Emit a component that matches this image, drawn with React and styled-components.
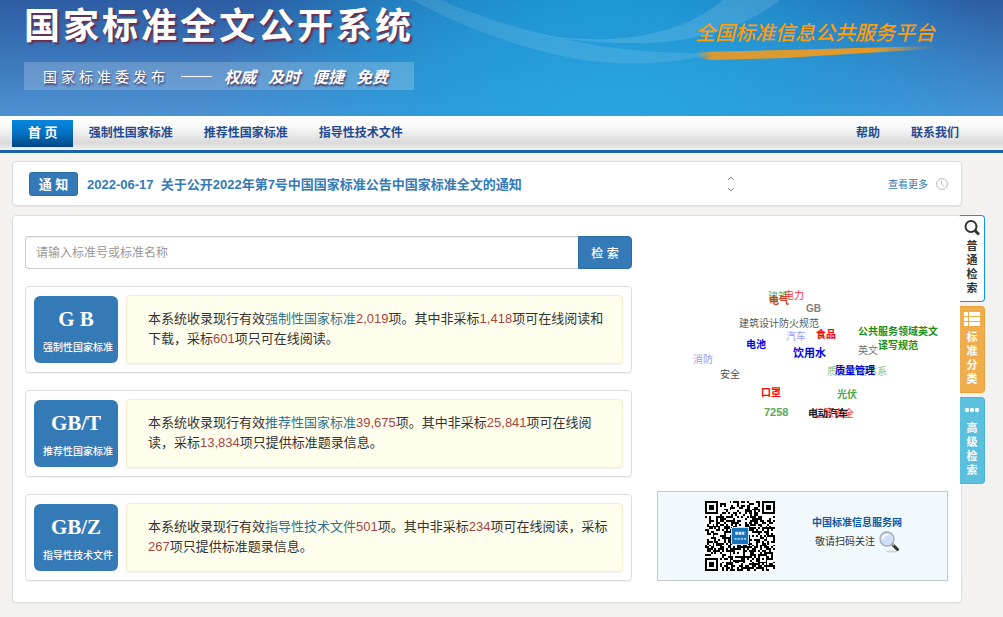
import React, { useState } from 'react'
import styled, { createGlobalStyle, css } from 'styled-components'

const sans = '"Liberation Sans", "Noto Sans CJK SC", sans-serif'
const serif = '"Liberation Serif", "Noto Sans CJK SC", serif'

const GlobalStyle = createGlobalStyle`
  * {
    box-sizing: border-box;
  }

  body {
    margin: 0;
    background: #f3f2f0;
    color: #333;
    font-family: ${sans};
    font-size: 12px;
  }

  button, input {
    font-family: inherit;
  }

  a {
    text-decoration: none;
  }
`

const Header = styled.header`
  position: relative;
  display: flex;
  justify-content: space-between;
  height: 116px;
  padding: 0 64px 0 24px;
  overflow: hidden;
  background:
    radial-gradient(ellipse 420px 220px at 62% 100%, #29a5e0 0%, rgba(38, 160, 222, 0.7) 45%, rgba(41, 165, 224, 0) 100%),
    radial-gradient(ellipse 360px 170px at 60% 0%, rgba(14, 144, 202, 0.9) 0%, rgba(14, 144, 202, 0) 100%),
    linear-gradient(180deg, #2d5ca3 0%, #4b92d3 100%);
`

const Waves = styled.svg`
  position: absolute;
  top: 0;
  left: 0;
  width: 100%;
  height: 116px;
`

const Brand = styled.div`
  position: relative;
  padding-top: 4px;
`

const SiteTitle = styled.h1`
  margin: 0;
  height: 58px;
  color: #fff;
  font-size: 36px;
  font-weight: 700;
  letter-spacing: 3px;
  line-height: 46px;
  text-shadow: 2px 2px 2px #6b2a4c;
`

const Slogan = styled.div`
  display: flex;
  align-items: center;
  height: 28px;
  padding: 0 20px 0 19px;
  gap: 12px;
  background: rgba(255, 255, 255, 0.2);
  color: #fff;
  font-family: ${serif};
  font-size: 14px;
  text-shadow: 1px 2px 2px #4a3460;
`

const Publisher = styled.span`
  letter-spacing: 4px;
`

const Dash = styled.span`
  width: 31px;
  height: 1px;
  background: #fff;
`

const Virtue = styled.em`
  font-size: 16px;
  font-weight: 700;
`

const Platform = styled.div`
  position: relative;
  padding-top: 20px;
  width: 244px;
  color: #ff9c0a;
  font-family: ${serif};
  font-size: 20px;
  font-style: italic;
  font-weight: 500;
  line-height: 26px;
  white-space: nowrap;

  svg {
    display: block;
  }
`

const Nav = styled.nav`
  display: flex;
  justify-content: space-between;
  height: 37px;
  padding: 4px 29px 0 12px;
  border-bottom: 3px solid #1b62ab;
  background: linear-gradient(180deg, #fff 0%, #fafafa 30%, #dadada 80%, #e6e6e6 90%, #f2f2f2 100%);
`

const NavGroup = styled.div`
  display: flex;
`

const NavLink = styled.a`
  height: 27px;
  padding: 0 15px 0 16px;
  color: #1f4a8f;
  font-size: 12px;
  font-weight: 700;
  line-height: 26px;

  ${({ $active }) => $active && css`
    background: linear-gradient(180deg, #0488de 0%, #0470c0 50%, #004684 100%);
    color: #fff;
    font-size: 13px;
  `}
`

const Panel = styled.section`
  border: 1px solid #ddd;
  border-radius: 4px;
  background: #fff;
  box-shadow: 0 1px 1px rgba(0, 0, 0, 0.05);
`

const Notice = styled(Panel)`
  display: flex;
  align-items: center;
  justify-content: space-between;
  height: 45px;
  margin: 8px 41px 9px 12px;
  padding: 0 13px 0 16px;
`

const NoticeMain = styled.div`
  display: flex;
  align-items: center;
  gap: 9px;
`

const NoticeButton = styled.button`
  width: 49px;
  height: 24px;
  padding: 0;
  border: 1px solid #2e6da4;
  border-radius: 3px;
  background: #337ab7;
  color: #fff;
  font-size: 13px;
  font-weight: 700;
  cursor: pointer;
`

const NoticeLink = styled.a`
  color: #337ab7;
  font-size: 13px;
  font-weight: 700;
  white-space: pre;
`

const NoticeSide = styled.div`
  display: flex;
  align-items: center;
  justify-content: space-between;
  width: 221px;
`

const Pager = styled.div`
  display: flex;
  flex-direction: column;
  gap: 6px;
`

const PagerButton = styled.button`
  display: block;
  height: 5px;
  padding: 0;
  border: 0;
  background: none;
  cursor: pointer;

  svg {
    display: block;
  }
`

const More = styled.a`
  display: flex;
  align-items: center;
  gap: 8px;
  color: #337ab7;
  font-size: 10px;
`

const Main = styled.main`
  display: flex;
  align-items: flex-start;
  padding: 0 18px 14px 12px;
`

const Content = styled(Panel)`
  display: flex;
  flex: 1;
  gap: 25px;
  padding: 20px 13px 21px 12px;
`

const Left = styled.div`
  display: flex;
  flex: 1;
  flex-direction: column;
  gap: 17px;
`

const SearchForm = styled.form`
  display: flex;
`

const SearchInput = styled.input`
  flex: 1;
  height: 33px;
  padding: 0 10px;
  border: 1px solid #ccc;
  border-right: 0;
  border-radius: 4px 0 0 4px;
  box-shadow: inset 0 1px 1px rgba(0, 0, 0, 0.075);
  font-size: 12px;

  &::placeholder {
    color: #999;
  }
`

const SearchButton = styled.button`
  width: 54px;
  height: 33px;
  padding: 0;
  border: 1px solid #2e6da4;
  border-radius: 0 4px 4px 0;
  background: #337ab7;
  color: #fff;
  font-size: 12px;
  font-weight: 500;
  cursor: pointer;
`

const Row = styled.article`
  display: flex;
  align-items: center;
  gap: 8px;
  height: 87px;
  padding: 0 8px;
  border: 1px solid #ddd;
  border-radius: 4px;
  box-shadow: 0 1px 1px rgba(0, 0, 0, 0.05);
`

const Tile = styled.a`
  display: flex;
  flex-direction: column;
  flex-shrink: 0;
  align-items: center;
  width: 84px;
  height: 67px;
  padding: 8px 0 0 4px;
  border-radius: 6px;
  background: #337ab7;
  color: #fff;
  font-size: 10px;
  font-weight: 500;
  line-height: 14px;
`

const TileCode = styled.span`
  height: 37px;
  padding-right: 4px;
  font-family: ${serif};
  font-size: 21px;
  font-weight: 700;
  line-height: 30px;
`

const Summary = styled.p`
  flex: 1;
  height: 69px;
  margin: 0;
  padding: 13px 10px 0 21px;
  border: 1px solid #faebcc;
  border-radius: 4px;
  background: #fffeec;
  box-shadow: 0 1px 1px rgba(0, 0, 0, 0.05);
  color: #333;
  font-size: 13px;
  line-height: 20px;
`

const Kind = styled.span`
  color: #31708f;
`

const Count = styled.span`
  color: #a94442;
`

const Right = styled.div`
  display: flex;
  flex-direction: column;
  width: 291px;
`

const Cloud = styled.div`
  position: relative;
  flex: 1;
`

const Word = styled.a`
  position: absolute;
  top: ${({ $y }) => $y}px;
  left: ${({ $x }) => $x}px;
  color: ${({ $color }) => $color};
  font-size: ${({ $size }) => $size || 10}px;
  font-weight: ${({ $bold }) => ($bold ? 700 : 400)};
  line-height: 14px;
  text-align: center;
  white-space: pre;
`

const Follow = styled.div`
  display: flex;
  align-items: center;
  height: 90px;
  padding-left: 47px;
  gap: 37px;
  border: 1px solid #c5c9cb;
  background: #f1f9fc;
`

const FollowText = styled.div`
  display: flex;
  flex-direction: column;
  padding-bottom: 4px;
  font-size: 10px;
  line-height: 16px;
`

const FollowLink = styled.a`
  color: #0a59a4;
  font-weight: 700;
`

const FollowHint = styled.span`
  display: flex;
  align-items: center;
  gap: 4px;
  padding-left: 3px;
`

const SideTabs = styled.aside`
  position: relative;
  display: flex;
  flex-direction: column;
  gap: 4px;
  width: 25px;
  margin-left: -2px;
`

const SideTab = styled.button`
  display: flex;
  flex-direction: column;
  align-items: center;
  gap: 3px;
  height: 87px;
  padding: 4px 0 0;
  border: 1px solid ${({ $border }) => $border};
  border-left: 0;
  border-radius: 0 4px 4px 0;
  background: ${({ $bg }) => $bg};
  color: ${({ $color }) => $color || '#fff'};
  font-size: 11px;
  font-weight: 700;
  line-height: 14px;
  cursor: pointer;
`

const TabText = styled.span`
  width: 11px;
  word-break: break-all;
`

const STANDARDS = [
  {
    code: 'G B',
    name: '强制性国家标准',
    parts: [['2,019', '项。其中非采标'], ['1,418', '项可在线阅读和下载，采标'], ['601', '项只可在线阅读。']]
  },
  {
    code: 'GB/T',
    name: '推荐性国家标准',
    parts: [['39,675', '项。其中非采标'], ['25,841', '项可在线阅读，采标'], ['13,834', '项只提供标准题录信息。']]
  },
  {
    code: 'GB/Z',
    name: '指导性技术文件',
    parts: [['501', '项。其中非采标'], ['234', '项可在线阅读，采标'], ['267', '项只提供标准题录信息。']]
  }
]

const WORDS = [
  { text: '建筑', x: 111, y: 54, color: '#66b366' },
  { text: '电气', x: 112, y: 58, color: '#c8402a', bold: true },
  { text: '电力', x: 127, y: 53, color: '#ff3333' },
  { text: 'GB', x: 149, y: 66, color: '#808080', bold: true },
  { text: '建筑设计防火规范', x: 82, y: 81, color: '#595959' },
  { text: '汽车', x: 129, y: 94, color: '#9999ff' },
  { text: '食品', x: 159, y: 92, color: '#ff0000', bold: true },
  { text: '公共服务领域英文\n译写规范', x: 201, y: 89, color: '#1a8f1a', bold: true },
  { text: '电池', x: 89, y: 102, color: '#0000ee', bold: true },
  { text: '饮用水', x: 136, y: 110, color: '#0000ee', bold: true, size: 11 },
  { text: '英文', x: 201, y: 108, color: '#737373' },
  { text: '消防', x: 36, y: 117, color: '#9999ff' },
  { text: '质量管理体系', x: 170, y: 129, color: '#8cc68c' },
  { text: '质量管理', x: 178, y: 128, color: '#0000dd', bold: true },
  { text: '安全', x: 63, y: 132, color: '#4d4d4d' },
  { text: '口罩', x: 104, y: 150, color: '#ff0000', bold: true },
  { text: '光伏', x: 180, y: 152, color: '#4da64d', bold: true },
  { text: '7258', x: 107, y: 169, color: '#59a659', bold: true, size: 11 },
  { text: '信息安全', x: 157, y: 171, color: '#ff6666', bold: true },
  { text: '电动汽车', x: 151, y: 171, color: '#1a1a1a', bold: true }
]

const QR_SIZE = 37

const isFinder = (x, y) => {
  const far = QR_SIZE - 8
  return (x < 8 && y < 8) || (x >= far && y < 8) || (x < 8 && y >= far)
}

const buildModules = () => {
  let path = ''
  let seed = 20220617
  for (let y = 0; y < QR_SIZE; y++) {
    for (let x = 0; x < QR_SIZE; x++) {
      seed = (seed * 1103515245 + 12345) % 2147483648
      if (!isFinder(x, y) && ((seed >> 12) & 15) < 8) path += `M${x} ${y}h1v1h-1z`
    }
  }
  return path
}

const QR_PATH = buildModules()

const FINDERS = [[0, 0], [30, 0], [0, 30]]

function QrCode() {
  return (
    <svg width="70" height="70" viewBox="0 0 37 37" role="img" aria-label="二维码" shapeRendering="crispEdges">
      <rect width="37" height="37" fill="#fff" />
      <path d={QR_PATH} fill="#000" />
      {[...FINDERS, [28, 28]].map(([x, y], i) => {
        const n = i < 3 ? 7 : 5
        return (
          <g key={i}>
            <rect x={x} y={y} width={n} height={n} fill="#000" />
            <rect x={x + 1} y={y + 1} width={n - 2} height={n - 2} fill="#fff" />
            <rect x={x + 2} y={y + 2} width={n - 4} height={n - 4} fill="#000" />
          </g>
        )
      })}
      <rect x="14" y="14" width="9" height="9" rx="1" fill="#1673b9" stroke="#d5e9f5" strokeWidth="0.5" />
      <path d="M16 17h5" stroke="#cfe6f6" strokeWidth="1.6" strokeDasharray="1.4 .3" shapeRendering="auto" />
      <path d="M15.500 20h6.500" stroke="#9fcbe8" strokeWidth="1" strokeDasharray="1.2 .5" shapeRendering="auto" />
    </svg>
  )
}

function HeaderWaves() {
  return (
    <Waves viewBox="0 0 1003 116" preserveAspectRatio="none" aria-hidden="true">
      <path d="M412 0C455 23 500 41 553 54C610 69 675 65 720 52C680 55 625 51 585 43C530 33 475 16 442 0Z" fill="#fff" opacity="0.1" />
      <path d="M515 29C590 48 674 42 723 0H780C735 36 670 45 620 43C580 42 545 37 515 29Z" fill="#fff" opacity="0.12" />
    </Waves>
  )
}

function BrushStroke() {
  return (
    <svg width="244" height="18" viewBox="0 0 244 18" aria-hidden="true">
      <defs>
        <linearGradient id="brush">
          <stop offset="0" stopColor="#e6992a" stopOpacity="0" />
          <stop offset="0.07" stopColor="#d99a32" />
          <stop offset="0.75" stopColor="#e3992a" />
          <stop offset="1" stopColor="#e3992a" stopOpacity="0" />
        </linearGradient>
        <filter id="soft">
          <feGaussianBlur stdDeviation="0.7" />
        </filter>
      </defs>
      <path d="M1 6L90 4L200 1L240 0L238 3L170 7L90 12L16 14L5 12Z" fill="url(#brush)" filter="url(#soft)" />
    </svg>
  )
}

function Magnifier() {
  return (
    <svg width="21" height="22" viewBox="0 0 21 22" aria-hidden="true">
      <ellipse cx="13" cy="20.5" rx="6" ry="1" fill="#cdd3d6" />
      <path d="M14 14L18.500 18.500" stroke="#333" strokeWidth="3" strokeLinecap="round" />
      <path d="M12.500 12L15 14.500" stroke="#aaa" strokeWidth="2" />
      <circle cx="8" cy="8" r="7" fill="#cfe0fa" stroke="#a3a9b5" strokeWidth="1.300" />
      <path d="M4 8a4 4 0 0 1 5-4" stroke="#f5f9ff" strokeWidth="2" fill="none" />
    </svg>
  )
}

function ClockIcon() {
  return (
    <svg width="12" height="12" viewBox="0 0 12 12" fill="none" stroke="#bbb" aria-hidden="true">
      <circle cx="6" cy="6" r="5.400" />
      <path d="M5.500 2.500V6L8 8.500" />
    </svg>
  )
}

function SearchIcon() {
  return (
    <svg width="16" height="16" viewBox="0 0 16 16" fill="none" stroke="#333" aria-hidden="true">
      <circle cx="7" cy="6.500" r="5.500" strokeWidth="2" />
      <path d="M11 10.500L15 14.500" strokeWidth="3" />
    </svg>
  )
}

function ListIcon() {
  return (
    <svg width="16" height="16" viewBox="0 0 16 16" fill="#fff" aria-hidden="true">
      <path d="M0 1h4v4H0zM5 1h11v4H5zM0 6h4v4H0zM5 6h11v4H5zM0 11h4v4H0zM5 11h11v4H5z" />
    </svg>
  )
}

function DotsIcon() {
  return (
    <svg width="16" height="16" viewBox="0 0 16 16" fill="#fff" aria-hidden="true">
      <circle cx="3" cy="8" r="2.200" />
      <circle cx="8" cy="8" r="2.200" />
      <circle cx="13" cy="8" r="2.200" />
    </svg>
  )
}

function StandardRow({ code, name, parts }) {
  return (
    <Row>
      <Tile href="#">
        <TileCode>{code}</TileCode>
        {name}
      </Tile>
      <Summary>
        本系统收录现行有效<Kind>{name}</Kind>
        {parts.map(([count, text]) => (
          <React.Fragment key={count}>
            <Count>{count}</Count>{text}
          </React.Fragment>
        ))}
      </Summary>
    </Row>
  )
}

function App() {
  const [keyword, setKeyword] = useState('')

  return (
    <>
      <GlobalStyle />
      <Header>
        <HeaderWaves />
        <Brand>
          <SiteTitle>国家标准全文公开系统</SiteTitle>
          <Slogan>
            <Publisher>国家标准委发布</Publisher>
            <Dash />
            <Virtue>权威</Virtue>
            <Virtue>及时</Virtue>
            <Virtue>便捷</Virtue>
            <Virtue>免费</Virtue>
          </Slogan>
        </Brand>
        <Platform>
          全国标准信息公共服务平台
          <BrushStroke />
        </Platform>
      </Header>

      <Nav>
        <NavGroup>
          <NavLink href="#" $active>首 页</NavLink>
          <NavLink href="#">强制性国家标准</NavLink>
          <NavLink href="#">推荐性国家标准</NavLink>
          <NavLink href="#">指导性技术文件</NavLink>
        </NavGroup>
        <NavGroup>
          <NavLink href="#">帮助</NavLink>
          <NavLink href="#">联系我们</NavLink>
        </NavGroup>
      </Nav>

      <Notice>
        <NoticeMain>
          <NoticeButton type="button">通 知</NoticeButton>
          <NoticeLink href="#">{'2022-06-17  关于公开2022年第7号中国国家标准公告中国家标准全文的通知'}</NoticeLink>
        </NoticeMain>
        <NoticeSide>
          <Pager>
            <PagerButton type="button" aria-label="上一条">
              <svg width="8" height="5" fill="none" stroke="#888"><path d="M1 4L4 1L7 4" /></svg>
            </PagerButton>
            <PagerButton type="button" aria-label="下一条">
              <svg width="8" height="5" fill="none" stroke="#888"><path d="M1 1L4 4L7 1" /></svg>
            </PagerButton>
          </Pager>
          <More href="#">
            查看更多
            <ClockIcon />
          </More>
        </NoticeSide>
      </Notice>

      <Main>
        <Content>
          <Left>
            <SearchForm onSubmit={e => e.preventDefault()}>
              <SearchInput
                type="text"
                aria-label="标准号或标准名称"
                placeholder="请输入标准号或标准名称"
                value={keyword}
                onChange={e => setKeyword(e.target.value)}
              />
              <SearchButton type="submit">检 索</SearchButton>
            </SearchForm>
            {STANDARDS.map(item => (
              <StandardRow key={item.code} {...item} />
            ))}
          </Left>
          <Right>
            <Cloud>
              {WORDS.map(word => (
                <Word
                  key={word.text}
                  href="#"
                  $x={word.x}
                  $y={word.y}
                  $color={word.color}
                  $bold={word.bold}
                  $size={word.size}
                >
                  {word.text}
                </Word>
              ))}
            </Cloud>
            <Follow>
              <QrCode />
              <FollowText>
                <FollowLink href="#">中国标准信息服务网</FollowLink>
                <FollowHint>
                  敬请扫码关注
                  <Magnifier />
                </FollowHint>
              </FollowText>
            </Follow>
          </Right>
        </Content>
        <SideTabs>
          <SideTab type="button" $bg="#fff" $border="#0d94f5" $color="#333">
            <SearchIcon />
            <TabText>普通检索</TabText>
          </SideTab>
          <SideTab type="button" $bg="#f0ad4e" $border="#eea236">
            <ListIcon />
            <TabText>标准分类</TabText>
          </SideTab>
          <SideTab type="button" $bg="#5bc0de" $border="#46b8da">
            <DotsIcon />
            <TabText>高级检索</TabText>
          </SideTab>
        </SideTabs>
      </Main>
    </>
  )
}

export default App
